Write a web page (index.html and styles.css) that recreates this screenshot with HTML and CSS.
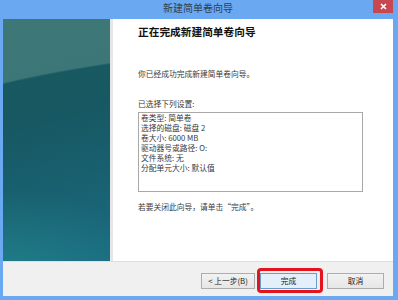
FILE: index.html
```html
<!DOCTYPE html>
<html lang="zh-CN">
<head>
<meta charset="utf-8">
<link rel="stylesheet" href="styles.css">
</head>
<body>
<div class="window">
  <div class="titlebar">
    <span class="spacer"></span>
    <span class="title">新建简单卷向导</span>
    <span class="close"><svg width="7" height="7" viewBox="0 0 7 7"><path d="M1 1L6 6M6 1L1 6" stroke="#fff" stroke-width="1.6"/></svg></span>
  </div>
  <div class="body">
    <div class="side"></div>
    <div class="divider"></div>
    <div class="content">
      <h1 class="heading">正在完成新建简单卷向导</h1>
      <p class="text done">你已经成功完成新建简单卷向导。</p>
      <p class="text label">已选择下列设置:</p>
      <div class="summary">
        <div>卷类型: 简单卷</div>
        <div>选择的磁盘: 磁盘 2</div>
        <div>卷大小: 6000 MB</div>
        <div>驱动器号或路径: O:</div>
        <div>文件系统: 无</div>
        <div>分配单元大小: 默认值</div>
      </div>
      <p class="text close-hint">若要关闭此向导，请单击“完成”。</p>
    </div>
  </div>
  <div class="footer">
    <button class="btn back">&lt; 上一步(B)</button>
    <span class="highlight"><button class="btn primary">完成</button></span>
    <button class="btn cancel">取消</button>
  </div>
</div>
</body>
</html>
```
FILE: styles.css
```css
html, body {
  margin: 0;
  padding: 0;
}
body {
  width: 398px;
  height: 300px;
  overflow: hidden;
  font-family: "Noto Sans CJK SC", "Liberation Sans", sans-serif;
}
.window {
  width: 398px;
  height: 300px;
  box-sizing: border-box;
  background: #6aa9f1;
  padding: 0 5px 4px 3px;
  display: flex;
  flex-direction: column;
}
.titlebar {
  height: 19px;
  display: grid;
  grid-template-columns: 20px 1fr 20px;
  align-items: start;
}
.title {
  text-align: center;
  font-size: 10px;
  line-height: 16px;
  color: #2f3d4f;
}
.close {
  width: 20px;
  height: 13px;
  background: #c9484f;
  display: flex;
  align-items: center;
  justify-content: center;
}
.close svg { display: block; }
.body {
  height: 242px;
  display: flex;
  background: #fff;
}
.side {
  width: 107px;
  background:
    radial-gradient(ellipse 800px 460px at 300px 490px, rgba(0,0,0,0) 99.6%, rgba(110,160,150,0.42) 100%),
    radial-gradient(ellipse 150px 80px at 0px 250px, rgba(40,150,150,0.45), rgba(40,150,150,0) 100%),
    linear-gradient(165deg, #1a5a60 0%, #175862 40%, #1a6a80 100%);
}
.divider {
  width: 3px;
  background: #e6e6e6;
}
.content {
  flex: 1;
  padding: 6px 0 0 25px;
  color: #3a3a3a;
}
.heading {
  margin: 0;
  font-size: 10.7px;
  line-height: 13px;
  font-weight: bold;
  color: #111;
}
.text {
  margin: 0;
  font-size: 7.75px;
  line-height: 10px;
}
.done { margin-top: 31px; }
.label { margin-top: 20px; }
.summary {
  margin-top: 3px;
  width: 225px;
  height: 80px;
  box-sizing: border-box;
  border: 1px solid #a8a8a8;
  padding: 0 0 0 2px;
  font-size: 7.75px;
  line-height: 10px;
}
.close-hint { margin-top: 10px; }
.footer {
  height: 35px;
  box-sizing: border-box;
  background: #f0f0f0;
  border-top: 1px solid #dedede;
  display: flex;
  align-items: flex-start;
  justify-content: flex-end;
  padding: 11px 9px 0 0;
  gap: 5px;
}
.btn {
  height: 16px;
  margin: 0;
  padding: 0;
  box-sizing: border-box;
  border: 1px solid #adadad;
  background: linear-gradient(#f2f2f2, #e6e6e6);
  font-family: "Noto Sans CJK SC", "Liberation Sans", sans-serif;
  font-size: 7.75px;
  line-height: 14px;
  color: #222;
  display: block;
}
.back { width: 54px; }
.cancel { width: 57px; margin-left: 5px; }
.primary {
  width: 57px;
  background: #e3effa;
  border-color: #6b9ccc;
}
.highlight {
  position: relative;
  display: block;
}
.highlight::after {
  content: "";
  position: absolute;
  left: -3px;
  right: -6px;
  top: -5px;
  bottom: -4px;
  border: 3px solid #e3141c;
  border-radius: 4px;
  box-sizing: border-box;
}
```
